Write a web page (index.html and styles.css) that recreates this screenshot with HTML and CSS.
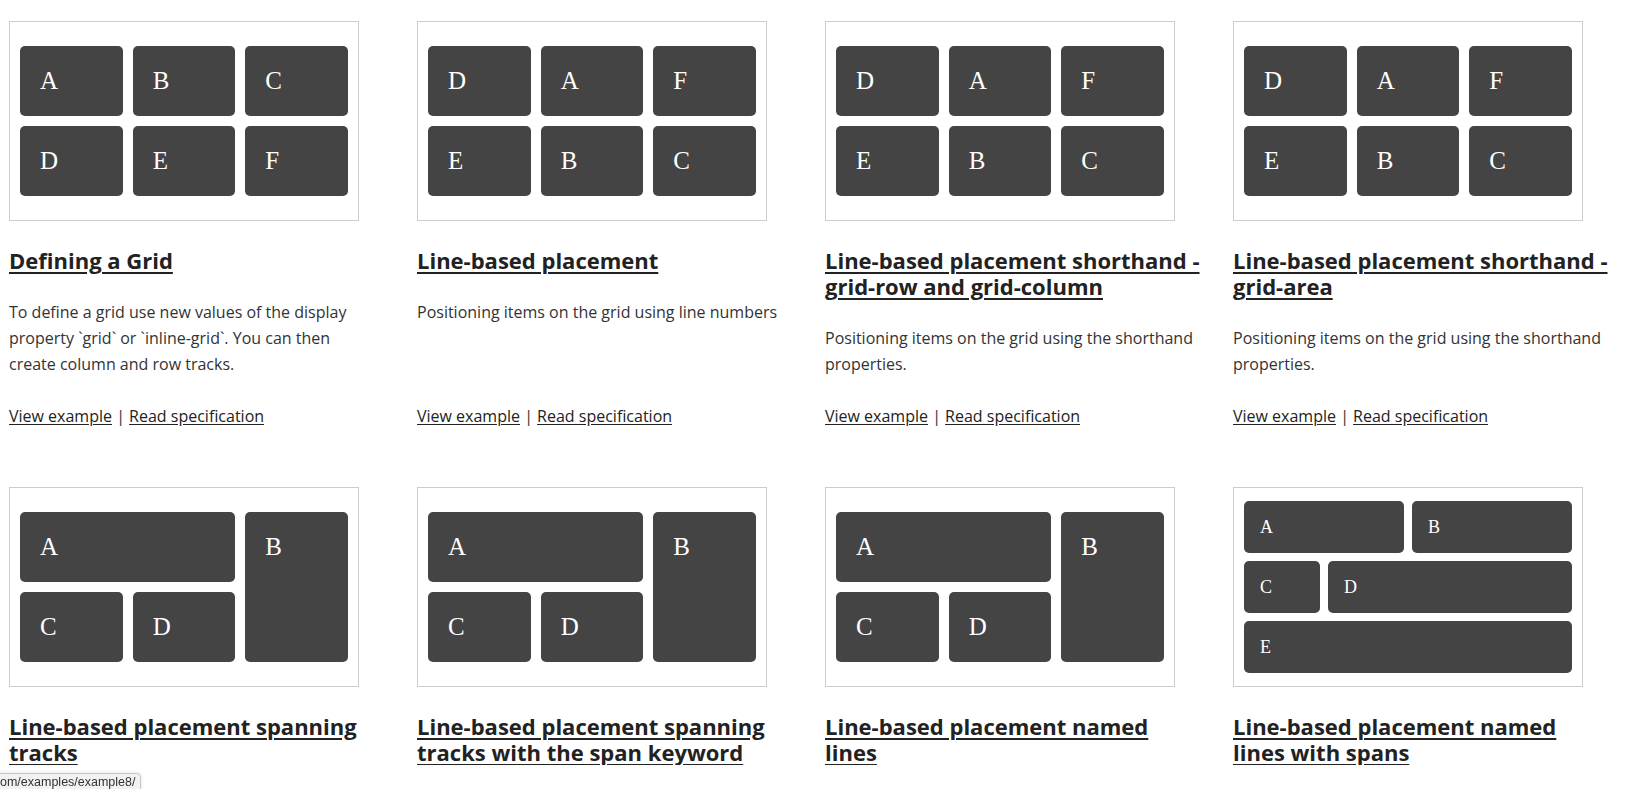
FILE: index.html
```html
<!DOCTYPE html>
<html lang="en">
<head>
<meta charset="utf-8">
<title>Grid by Example</title>
<link rel="stylesheet" href="styles.css">
</head>
<body>
<main class="examples">
  <article class="card">
    <div class="frame"><div class="demo g3">
      <div class="box">A</div><div class="box">B</div><div class="box">C</div>
      <div class="box">D</div><div class="box">E</div><div class="box">F</div>
    </div></div>
    <h2 class="title"><a href="#">Defining a Grid</a></h2>
    <p class="desc">To define a grid use new values of the display property `grid` or `inline-grid`. You can then create column and row tracks.</p>
    <p class="links"><a href="#">View example</a> | <a href="#">Read specification</a></p>
  </article>
  <article class="card">
    <div class="frame"><div class="demo g3">
      <div class="box">D</div><div class="box">A</div><div class="box">F</div>
      <div class="box">E</div><div class="box">B</div><div class="box">C</div>
    </div></div>
    <h2 class="title"><a href="#">Line-based placement</a></h2>
    <p class="desc">Positioning items on the grid using line numbers</p>
    <p class="links"><a href="#">View example</a> | <a href="#">Read specification</a></p>
  </article>
  <article class="card">
    <div class="frame"><div class="demo g3">
      <div class="box">D</div><div class="box">A</div><div class="box">F</div>
      <div class="box">E</div><div class="box">B</div><div class="box">C</div>
    </div></div>
    <h2 class="title"><a href="#">Line-based placement shorthand - grid-row and grid-column</a></h2>
    <p class="desc">Positioning items on the grid using the shorthand properties.</p>
    <p class="links"><a href="#">View example</a> | <a href="#">Read specification</a></p>
  </article>
  <article class="card">
    <div class="frame"><div class="demo g3">
      <div class="box">D</div><div class="box">A</div><div class="box">F</div>
      <div class="box">E</div><div class="box">B</div><div class="box">C</div>
    </div></div>
    <h2 class="title"><a href="#">Line-based placement shorthand - grid-area</a></h2>
    <p class="desc">Positioning items on the grid using the shorthand properties.</p>
    <p class="links"><a href="#">View example</a> | <a href="#">Read specification</a></p>
  </article>

  <article class="card">
    <div class="frame"><div class="demo g3">
      <div class="box span-a">A</div><div class="box span-b">B</div>
      <div class="box">C</div><div class="box">D</div>
    </div></div>
    <h2 class="title"><a href="#">Line-based placement spanning tracks</a></h2>
  </article>
  <article class="card">
    <div class="frame"><div class="demo g3">
      <div class="box span-a">A</div><div class="box span-b">B</div>
      <div class="box">C</div><div class="box">D</div>
    </div></div>
    <h2 class="title"><a href="#">Line-based placement spanning tracks with the span keyword</a></h2>
  </article>
  <article class="card">
    <div class="frame"><div class="demo g3">
      <div class="box span-a">A</div><div class="box span-b">B</div>
      <div class="box">C</div><div class="box">D</div>
    </div></div>
    <h2 class="title"><a href="#">Line-based placement named lines</a></h2>
  </article>
  <article class="card">
    <div class="frame"><div class="demo g4">
      <div class="box n-a">A</div><div class="box n-b">B</div>
      <div class="box n-c">C</div><div class="box n-d">D</div>
      <div class="box n-e">E</div>
    </div></div>
    <h2 class="title"><a href="#">Line-based placement named lines with spans</a></h2>
  </article>
</main>
<div class="status">om/examples/example8/</div>
</body>
</html>
```

FILE: styles.css
```css
html, body {
  margin: 0;
  padding: 0;
  background: #fff;
}

body {
  font-family: "Open Sans", "Liberation Sans", sans-serif;
  color: #222;
  overflow: hidden;
}

.examples {
  display: grid;
  grid-template-columns: repeat(4, 376px);
  column-gap: 32px;
  row-gap: 58px;
  padding: 21px 0 0 9px;
}

.card {
  display: flex;
  flex-direction: column;
}

.frame {
  box-sizing: border-box;
  width: 350px;
  height: 200px;
  border: 1px solid #cdcdcd;
  padding: 0 10px;
  display: flex;
  align-items: center;
}

.demo {
  display: grid;
  width: 100%;
}

.g3 {
  grid-template-columns: repeat(3, 1fr);
  grid-template-rows: 70px 70px;
  gap: 10px;
}

.g4 {
  grid-template-columns: repeat(4, 1fr);
  grid-template-rows: 52px 52px 52px;
  gap: 8px;
}

.box {
  background: #444;
  color: #fff;
  border-radius: 5px;
  font-family: "Liberation Serif", "Times New Roman", serif;
  font-size: 25px;
  line-height: 1.1;
  padding: 21px 20px 0;
}

.g4 .box {
  font-size: 18px;
  padding: 17px 16px 0;
}

.span-a { grid-column: 1 / 3; grid-row: 1; }
.span-b { grid-column: 3; grid-row: 1 / 3; }

.n-a { grid-column: 1 / 3; }
.n-b { grid-column: 3 / 5; }
.n-c { grid-column: 1 / 2; }
.n-d { grid-column: 2 / 5; }
.n-e { grid-column: 1 / 5; }

.title {
  margin: 26px 0 0;
  font-size: 22px;
  line-height: 26px;
  font-weight: 700;
}

.title a {
  color: #222;
  text-decoration: underline;
  text-decoration-thickness: 2px;
  text-underline-offset: 3px;
}

.desc {
  margin: 26px 0 0;
  max-width: 370px;
  font-size: 16px;
  line-height: 26px;
  color: #333;
}

.links {
  margin: auto 0 0;
  padding-top: 26px;
  font-size: 16px;
  line-height: 26px;
  color: #333;
}

.links a {
  color: #222;
  text-decoration: underline;
  text-underline-offset: 2px;
}

.status {
  position: fixed;
  left: -1px;
  bottom: -2px;
  height: 16px;
  padding: 0 5px 0 0;
  background: #f2f2f2;
  border: 1px solid #c6c6c6;
  border-top-right-radius: 4px;
  box-shadow: 0 0 4px rgba(0, 0, 0, 0.12);
  font-family: "Liberation Sans", Arial, sans-serif;
  font-size: 12.5px;
  line-height: 16px;
  color: #333;
  white-space: nowrap;
}
```
